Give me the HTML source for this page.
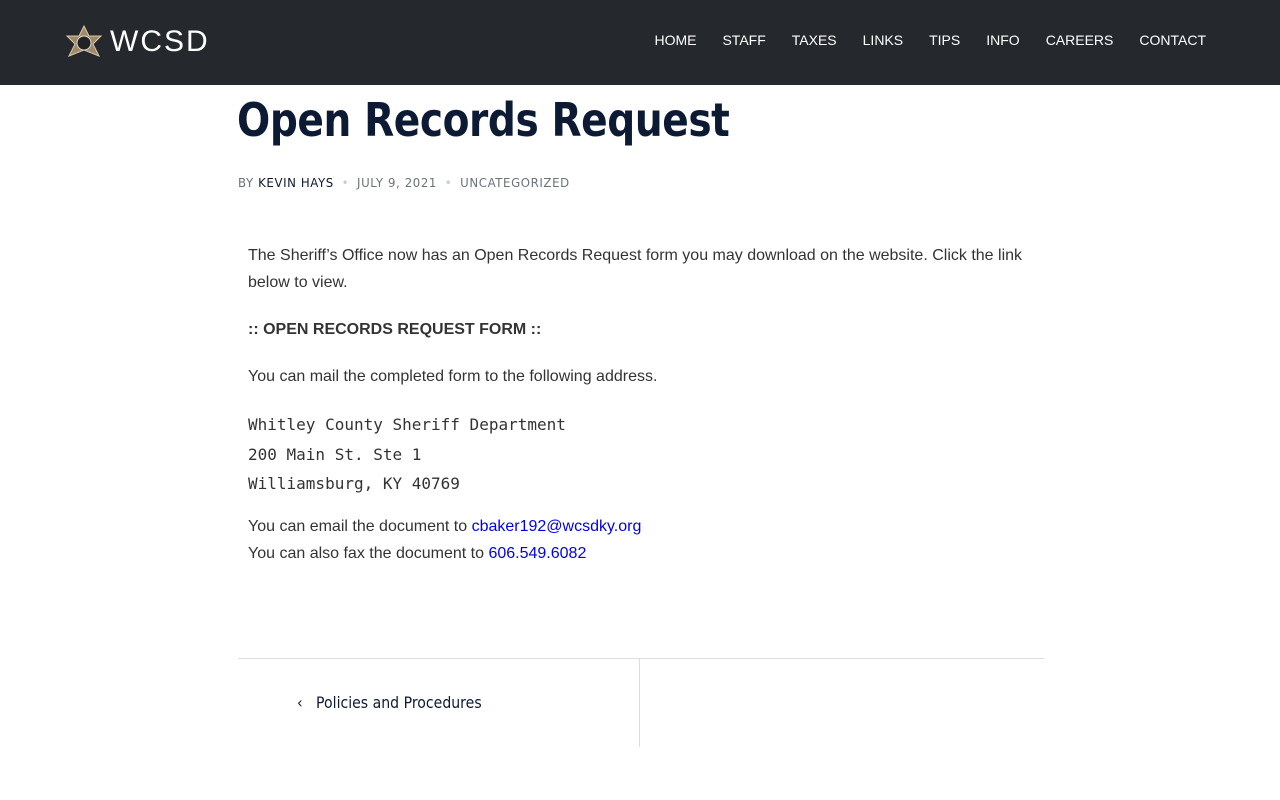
<!DOCTYPE html>
<html><head><style>
body{margin:0;background:#fff;font-family:"Liberation Sans",sans-serif;}
.hd{height:85px;background:#25282d;position:relative;}
.logo{position:absolute;left:66px;top:25px;}
.logo span{position:absolute;left:44px;top:0px;color:#fff;font-size:30px;letter-spacing:2px;font-family:"Liberation Sans",sans-serif;}
.nav{position:absolute;right:74px;top:32px;display:flex;gap:26px;color:#fff;font-size:14px;}
h1{position:absolute;left:237px;top:93px;margin:0;font-size:46px;color:#0c1a34;font-family:"DejaVu Sans",sans-serif;font-weight:bold;letter-spacing:-0.5px;transform:scaleX(0.85);transform-origin:left;white-space:nowrap}
.meta{position:absolute;left:238px;top:176px;font-size:12px;letter-spacing:.6px;color:#6b7279;font-family:"DejaVu Sans",sans-serif;transform:scaleX(0.98);transform-origin:left;white-space:nowrap}
.meta b{color:#0c1a34;font-weight:normal}
.meta i{font-style:normal;color:#ccc;margin:0 8px}
.c{position:absolute;left:248px;top:242px;width:790px;color:#333;font-size:16px;line-height:27px;}
.c p{margin:0 0 20px}
pre{font-family:"DejaVu Sans Mono",monospace;font-size:16px;line-height:29.5px;margin:0 0 14px;color:#333}
a{color:#0000ee;text-decoration:none}
.pn{position:absolute;left:238px;top:658px;width:806px;border-top:1px solid #ddd;height:88px;}
.pn .d{position:absolute;left:401px;top:0;height:88px;border-left:1px solid #ddd}
.pn span{position:absolute;left:59px;top:34px;color:#0c1a34;font-size:16px;font-family:"DejaVu Sans",sans-serif;transform:scaleX(0.88);transform-origin:left;white-space:nowrap}
</style></head><body>
<div class="hd">
<div class="logo"><svg width="36" height="38" viewBox="0 0 36 38"><polygon points="18,1 23,11 35,11 27,19 33,31 18,25 3,31 9,19 1,11 13,11" fill="#a08a6a" stroke="#d8c8a8"/><circle cx="18" cy="18" r="7" fill="#222" stroke="#ddd"/></svg><span>WCSD</span></div>
<div class="nav"><span>HOME</span><span>STAFF</span><span>TAXES</span><span>LINKS</span><span>TIPS</span><span>INFO</span><span>CAREERS</span><span>CONTACT</span></div>
</div>
<h1>Open Records Request</h1>
<div class="meta">BY <b>KEVIN HAYS</b><i>•</i>JULY 9, 2021<i>•</i>UNCATEGORIZED</div>
<div class="c">
<p>The Sheriff’s Office now has an Open Records Request form you may download on the website. Click the link below to view.</p>
<p><b>:: OPEN RECORDS REQUEST FORM ::</b></p>
<p>You can mail the completed form to the following address.</p>
<pre>Whitley County Sheriff Department
200 Main St. Ste 1
Williamsburg, KY 40769</pre>
<p>You can email the document to <a>cbaker192@wcsdky.org</a><br>You can also fax the document to <a>606.549.6082</a></p>
</div>
<div class="pn"><div class="d"></div><span>‹&nbsp;&nbsp; Policies and Procedures</span></div>
</body></html>
